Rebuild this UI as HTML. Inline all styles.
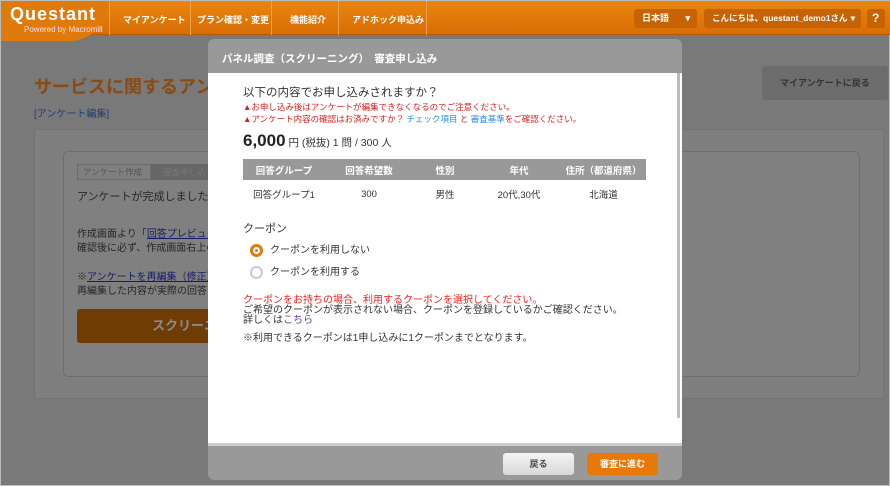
<!DOCTYPE html>
<html><head><meta charset="utf-8"><style>
*{box-sizing:border-box;margin:0;padding:0}
body{width:890px;height:486px;overflow:hidden;background:#797979;font-family:"Liberation Sans","Noto Sans CJK JP",sans-serif;position:relative;border:1px solid #bbb}
.hdr{position:absolute;left:0;top:0;width:890px;height:34px;background:linear-gradient(#e9850f,#d96e05);border-bottom:1px solid #b85a00}
.logo{position:absolute;left:0;top:0;width:108px;height:40px;background:#e07a0a;border-radius:0 0 40px 0}
.logo b{position:absolute;left:9px;top:3px;color:#fff;font-size:18px;letter-spacing:1px;font-weight:bold}
.logo i{position:absolute;left:23px;top:24px;color:#fde;font-size:8px;font-style:normal;white-space:nowrap}
.nav{position:absolute;top:12px;color:#fff;font-size:9px;font-weight:bold;white-space:nowrap}
.sep{position:absolute;top:0;width:1px;height:34px;background:#f0a050}
.pill{position:absolute;top:8px;height:19px;background:#c66405;border-radius:3px;color:#fff;font-size:9px;font-weight:bold;line-height:19px;padding-left:8px;white-space:nowrap;overflow:hidden}
.panel{position:absolute;left:33px;top:128px;width:850px;height:270px;background:#7f7f7f;border:1px solid #747474}
.inner{position:absolute;left:62px;top:150px;width:797px;height:226px;border:1px solid #6e6e6e;border-radius:5px;background:#808080}
.t{position:absolute;font-size:11px;color:#262626;white-space:nowrap}
.modal{position:absolute;left:207px;top:38px;width:474px;height:441px;background:#999;border-radius:6px;overflow:hidden}
.mh{position:absolute;left:14px;top:12px;color:#fff;font-size:10.5px;font-weight:bold;white-space:nowrap}
.mb{position:absolute;left:0;top:34px;width:474px;height:373px;background:#fff;border-bottom:3px solid #ccc}
.m{position:absolute;white-space:nowrap;font-size:10px;color:#333;line-height:10px}
.red{color:#d82020;font-size:8.5px}
.blue{color:#2a8ce0}
table{position:absolute;left:35px;top:86px;width:403px;border-collapse:collapse;font-size:9.5px;table-layout:fixed}
th{background:#999;color:#fff;height:21px;font-weight:bold;white-space:nowrap}
td{height:28px;text-align:center;color:#333;white-space:nowrap}
.radio{position:absolute;width:13px;height:13px;border-radius:50%}
.btn{position:absolute;top:414px;width:71px;height:22px;border-radius:3px;font-size:9px;font-weight:bold;text-align:center;line-height:22px}
</style></head><body>
<div class="hdr">
<div class="logo"><b>Questant</b><i>Powered by Macromill</i></div>
<div class="sep" style="left:108px"></div>
<div class="nav" style="left:122px">マイアンケート</div>
<div class="sep" style="left:189px"></div>
<div class="nav" style="left:196px">プラン確認・変更</div>
<div class="sep" style="left:270px"></div>
<div class="nav" style="left:289px">機能紹介</div>
<div class="sep" style="left:337px"></div>
<div class="nav" style="left:351px">アドホック申込み</div>
<div class="sep" style="left:425px"></div>
<div class="pill" style="left:633px;width:63px">日本語 <span style="position:absolute;right:7px">▾</span></div>
<div class="pill" style="left:703px;width:157px;font-size:8.5px">こんにちは、questant_demo1さん <span style="position:absolute;right:6px">▾</span></div>
<div class="pill" style="left:866px;width:18px;padding-left:5px;font-size:12px">?</div>
</div>
<div class="t" style="left:33px;top:72px;font-size:18px;font-weight:bold;color:#8a4a10">サービスに関するアンケート</div>
<div class="t" style="left:33px;top:104px;font-size:10px;color:#1f3f77">[アンケート編集]</div>
<div style="position:absolute;left:761px;top:65px;width:126px;height:34px;background:#6c6c6c;border-radius:3px;color:#333;font-size:9px;text-align:center;line-height:34px;font-weight:bold">マイアンケートに戻る</div>
<div class="panel"></div>
<div class="inner"></div>
<div style="position:absolute;left:76px;top:163px;width:74px;height:16px;border:1px solid #6c6c6c;background:#7f7f7f;font-size:8.5px;color:#555;line-height:14px;padding-left:5px;white-space:nowrap">アンケート作成</div>
<div style="position:absolute;left:150px;top:163px;width:60px;height:16px;background:#666;font-size:8.5px;color:#777;line-height:16px;padding-left:12px;white-space:nowrap">審査申し込</div>
<div class="t" style="left:76px;top:187px">アンケートが完成しましたら、</div>
<div class="t" style="left:76px;top:224px;font-size:10px">作成画面より「<u style="color:#1a1a6a">回答プレビュー</u></div>
<div class="t" style="left:76px;top:238px;font-size:10px">確認後に必ず、作成画面右上の</div>
<div class="t" style="left:76px;top:267px;font-size:10px">※<u style="color:#1a1a6a">アンケートを再編集（修正）</u></div>
<div class="t" style="left:76px;top:281px;font-size:10px">再編集した内容が実際の回答</div>
<div style="position:absolute;left:76px;top:308px;width:140px;height:34px;background:#6f3c06;border-radius:3px;color:#8a8a8a;font-weight:bold;font-size:13px;line-height:34px;padding-left:75px;white-space:nowrap;overflow:hidden">スクリーニ</div>
<div class="modal">
<div class="mh">パネル調査（スクリーニング）　審査申し込み</div>
<div class="mb">
<div class="m" style="left:35px;top:14px;font-size:11.5px;line-height:12px">以下の内容でお申し込みされますか？</div>
<div class="m red" style="left:35px;top:29px">▲お申し込み後はアンケートが編集できなくなるのでご注意ください。</div>
<div class="m red" style="left:35px;top:41px">▲アンケート内容の確認はお済みですか？ <span class="blue">チェック項目</span> と <span class="blue">審査基準</span>をご確認ください。</div>
<div class="m" style="left:35px;top:59px;font-size:10.5px;line-height:18px"><b style="font-size:17px;color:#222">6,000</b> 円 (税抜) 1 問 / 300 人</div>
<table><colgroup><col style="width:82px"><col style="width:88px"><col style="width:64px"><col style="width:84px"><col style="width:85px"></colgroup>
<tr><th>回答グループ</th><th>回答希望数</th><th>性別</th><th>年代</th><th>住所（都道府県）</th></tr>
<tr><td>回答グループ1</td><td>300</td><td>男性</td><td>20代,30代</td><td>北海道</td></tr></table>
<div class="m" style="left:35px;top:151px;font-size:11px;line-height:11px">クーポン</div>
<div class="radio" style="left:42px;top:171px;border:3px solid #e07a0a;background:#fff"><div style="position:absolute;left:2px;top:2px;width:3px;height:3px;border-radius:50%;background:#e07a0a"></div></div>
<div class="m" style="left:62px;top:173px">クーポンを利用しない</div>
<div class="radio" style="left:42px;top:193px;border:2px solid #c8ccd0"></div>
<div class="m" style="left:62px;top:195px">クーポンを利用する</div>
<div class="m" style="left:35px;top:223px;color:#f02020">クーポンをお持ちの場合、利用するクーポンを選択してください。</div>
<div class="m" style="left:35px;top:233px">ご希望のクーポンが表示されない場合、クーポンを登録しているかご確認ください。</div>
<div class="m" style="left:35px;top:243px">詳しくは<span style="color:#6a3aa8">こちら</span></div>
<div class="m" style="left:35px;top:261px">※利用できるクーポンは1申し込みに1クーポンまでとなります。</div>
<div style="position:absolute;left:469px;top:0;width:3px;height:345px;background:#bbb"></div>
</div>
<div class="btn" style="left:295px;background:linear-gradient(#f4f4f4,#d8d8d8);color:#444">戻る</div>
<div class="btn" style="left:379px;background:#e87808;color:#fff">審査に進む</div>
</div>
</body></html>
